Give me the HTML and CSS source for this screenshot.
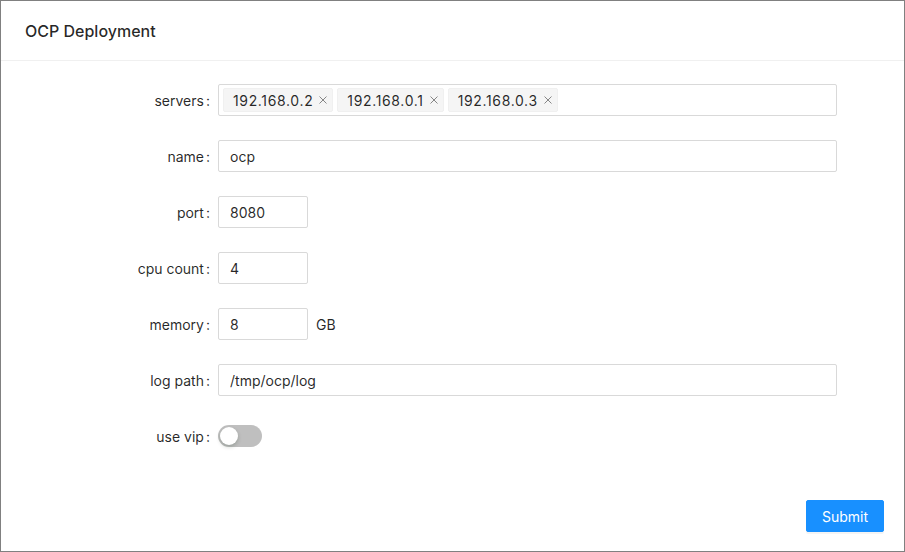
FILE: index.html
```html
<!DOCTYPE html>
<html>
<head>
<meta charset="utf-8">
<link rel="stylesheet" href="styles.css">
</head>
<body>
<div class="card">
  <div class="card-head">OCP Deployment</div>
  <div class="card-body">
    <form class="form">
      <div class="row">
        <label class="label">servers</label>
        <div class="control">
          <div class="select">
            <span class="tag">192.168.0.2<svg class="x" viewBox="0 0 10 10"><path d="M1.5 1.5L8.5 8.5M8.5 1.5L1.5 8.5"/></svg></span>
            <span class="tag">192.168.0.1<svg class="x" viewBox="0 0 10 10"><path d="M1.5 1.5L8.5 8.5M8.5 1.5L1.5 8.5"/></svg></span>
            <span class="tag">192.168.0.3<svg class="x" viewBox="0 0 10 10"><path d="M1.5 1.5L8.5 8.5M8.5 1.5L1.5 8.5"/></svg></span>
          </div>
        </div>
      </div>
      <div class="row">
        <label class="label">name</label>
        <div class="control"><div class="input">ocp</div></div>
      </div>
      <div class="row">
        <label class="label">port</label>
        <div class="control"><div class="input small">8080</div></div>
      </div>
      <div class="row">
        <label class="label">cpu count</label>
        <div class="control"><div class="input small">4</div></div>
      </div>
      <div class="row">
        <label class="label">memory</label>
        <div class="control"><div class="input small">8</div><span class="suffix">GB</span></div>
      </div>
      <div class="row">
        <label class="label">log path</label>
        <div class="control"><div class="input">/tmp/ocp/log</div></div>
      </div>
      <div class="row">
        <label class="label">use vip</label>
        <div class="control"><span class="switch"><span class="knob"></span></span></div>
      </div>
    </form>
  </div>
  <div class="card-foot">
    <button class="btn" type="button">Submit</button>
  </div>
</div>
</body>
</html>
```
FILE: styles.css
```css
* { box-sizing: border-box; }
html, body { margin: 0; padding: 0; }
body {
  font-family: Inter, "Noto Sans", "Liberation Sans", sans-serif;
  font-size: 14px;
  color: rgba(0,0,0,0.85);
  background: #fff;
}
.card {
  width: 905px;
  height: 552px;
  border: 1px solid #808080;
  display: flex;
  flex-direction: column;
}
.card-head {
  height: 60px;
  border-bottom: 1px solid #f0f0f0;
  padding: 1px 24px 0;
  display: flex;
  align-items: center;
  font-size: 16px;
  font-weight: 500;
}
.card-body {
  flex: 1;
  padding: 23px 0 0 0;
}
.form { margin: 0; }
.row {
  display: flex;
  align-items: center;
  height: 32px;
  margin-bottom: 24px;
}
.label {
  width: 217px;
  flex: none;
  text-align: right;
  padding-right: 8px;
  white-space: nowrap;
}
.label::after {
  content: ":";
  margin-left: 2px;
}
.control {
  width: 619px;
  display: flex;
  align-items: center;
}
.input {
  width: 100%;
  height: 32px;
  border: 1px solid #d9d9d9;
  border-radius: 2px;
  padding: 0 11px;
  display: flex;
  align-items: center;
}
.input.small { width: 90px; }
.suffix { margin-left: 8px; }
.select {
  width: 100%;
  height: 32px;
  border: 1px solid #d9d9d9;
  border-radius: 2px;
  padding: 1px 4px;
  display: flex;
  align-items: center;
  gap: 4px;
}
.tag {
  height: 24px;
  background: #f5f5f5;
  border: 1px solid #f0f0f0;
  border-radius: 2px;
  padding: 0 4px 0 9px;
  display: inline-flex;
  align-items: center;
  letter-spacing: 0.65px;
}
.x {
  width: 10px;
  height: 10px;
  margin-left: 5px;
  fill: none;
  stroke: rgba(0,0,0,0.45);
  stroke-width: 1;
}
.switch {
  position: relative;
  display: inline-block;
  width: 44px;
  height: 22px;
  border-radius: 11px;
  background: rgba(0,0,0,0.25);
}
.knob {
  position: absolute;
  left: 2px;
  top: 2px;
  width: 18px;
  height: 18px;
  border-radius: 50%;
  background: #fff;
  box-shadow: 0 2px 4px rgba(0,35,11,0.2);
}
.card-foot {
  display: flex;
  justify-content: flex-end;
  padding: 0 20px 19px 0;
}
.btn {
  height: 32px;
  padding: 0 15px;
  background: #1890ff;
  border: 1px solid #1890ff;
  border-radius: 2px;
  color: #fff;
  font-family: inherit;
  font-size: 14px;
  box-shadow: 0 2px 0 rgba(0,0,0,0.045);
}
```
